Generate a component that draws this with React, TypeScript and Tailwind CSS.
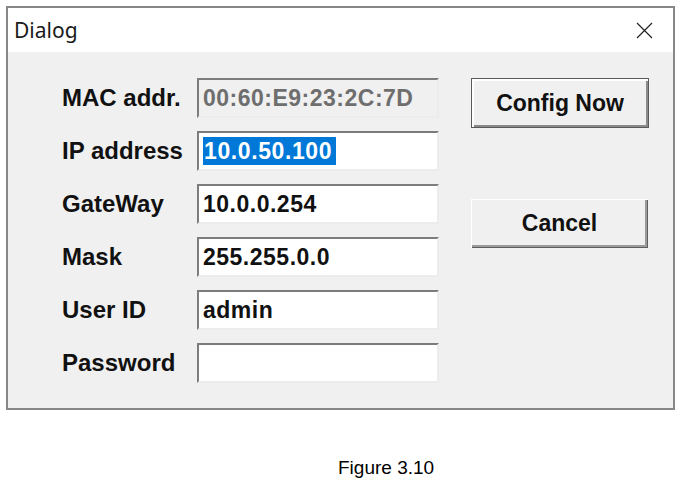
import { useState } from 'react';

const fields = [
  { label: 'MAC addr.', value: '00:60:E9:23:2C:7D', disabled: true },
  { label: 'IP address', value: '10.0.50.100', selected: true },
  { label: 'GateWay', value: '10.0.0.254' },
  { label: 'Mask', value: '255.255.0.0' },
  { label: 'User ID', value: 'admin' },
  { label: 'Password', value: '' },
];

function Field({ label, value, disabled, selected }: { label: string; value: string; disabled?: boolean; selected?: boolean }) {
  return (
    <div className="flex items-center h-[40px]">
      <div className="w-[135px] text-[24px] font-bold text-[#111] leading-none">{label}</div>
      <div
        className={`w-[242px] h-[40px] flex items-center pl-[4px] text-[23px] font-bold border-2 border-t-[#7c7c7c] border-l-[#7c7c7c] border-r-[#ececec] border-b-[#ececec] ${
          disabled ? 'bg-[#f0f0f0] text-[#6e6e6e]' : 'bg-white text-[#111]'
        }`}
      >
        {selected ? (
          <span className="bg-[#0078d7] text-white leading-[28px] pl-[1px] pr-[4px] tracking-[0.6px]">{value}</span>
        ) : (
          <span className="tracking-[0.5px] leading-none">{value}</span>
        )}
      </div>
    </div>
  );
}

export default function App() {
  const [values] = useState(fields);

  return (
    <div className="min-h-screen bg-white pt-[6px] pl-[6px] font-['Liberation_Sans',Arial,sans-serif]">
      <div className="w-[669px] h-[404px] border-2 border-[#878787] flex flex-col">
        {/* title bar */}
        <div className="h-[44px] bg-white flex items-center justify-between pl-[6px] pr-[20px]">
          <span className="font-['Noto_Sans',sans-serif] text-[21px] text-[#1a1a1a] leading-none">Dialog</span>
          <svg width="17" height="17" viewBox="0 0 17 17" className="text-[#222]">
            <path d="M1 1 L16 16 M16 1 L1 16" stroke="currentColor" strokeWidth="1.2" fill="none" />
          </svg>
        </div>

        {/* body */}
        <div className="flex-1 bg-[#f0f0f0] flex pt-[26px] pl-[54px]">
          <div className="flex flex-col gap-[13px]">
            {values.map((f) => (
              <Field key={f.label} {...f} />
            ))}
          </div>

          <div className="flex flex-col ml-[32px]">
            <button className="w-[178px] h-[50px] border border-[#5a5a5a] bg-[#f0f0f0] text-[23px] font-bold text-[#111] shadow-[inset_2px_2px_0_#ffffff,inset_-2px_-2px_0_#8a8a8a]">
              Config Now
            </button>
            <button className="mt-[71px] w-[177px] h-[49px] bg-[#f0f0f0] text-[23px] font-bold text-[#111] shadow-[inset_1px_1px_0_#ffffff,inset_-1px_-1px_0_#5f5f5f,inset_-3px_-3px_0_#9a9a9a]">
              Cancel
            </button>
          </div>
        </div>
      </div>

      <div className="pt-[47px] pl-[332px] text-[19px] text-black leading-[22px]">Figure 3.10</div>
    </div>
  );
}
